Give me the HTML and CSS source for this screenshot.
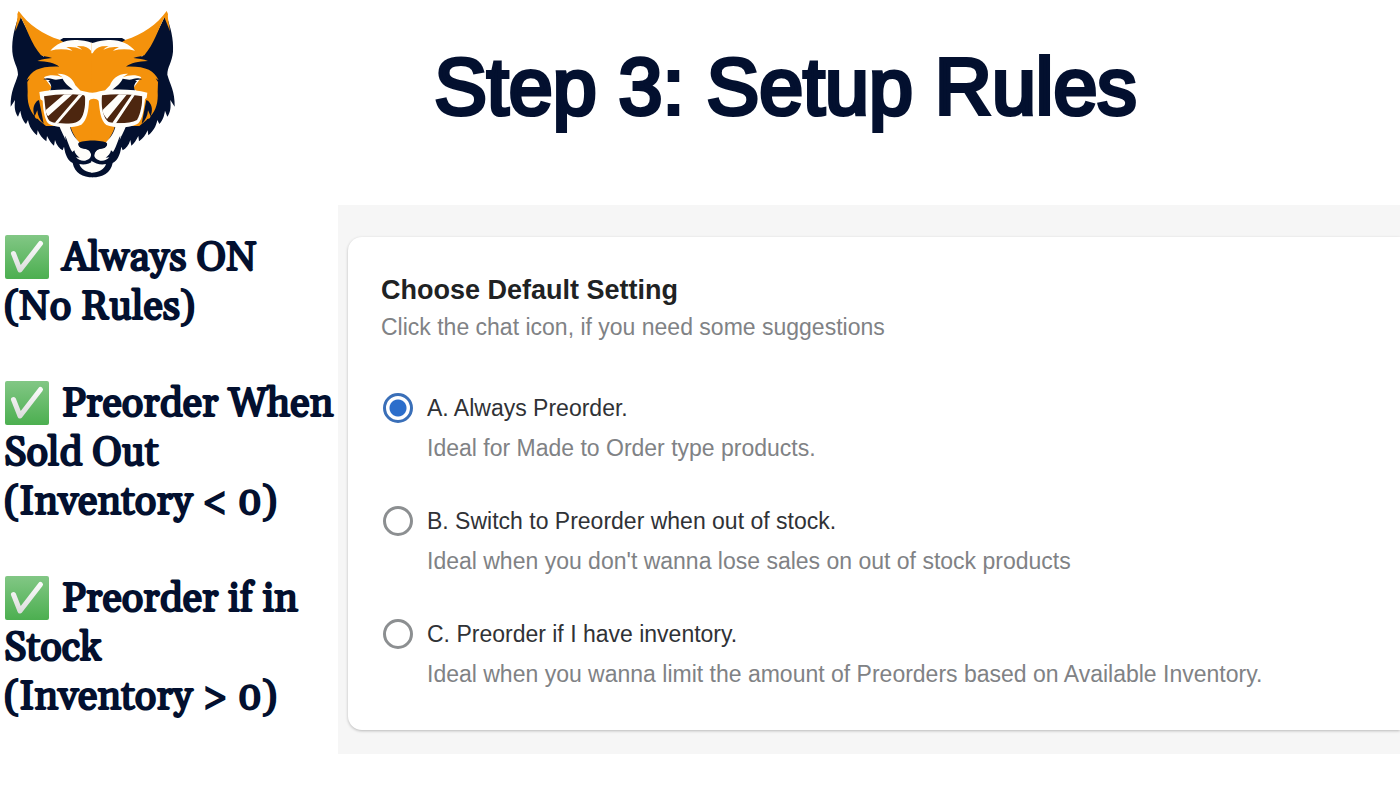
FILE: index.html
```html
<!DOCTYPE html>
<html lang="en">
<head>
<meta charset="utf-8">
<meta name="viewport" content="width=device-width, initial-scale=1">
<title>Step 3: Setup Rules</title>
<link rel="stylesheet" href="styles.css">
</head>
<body>
<header class="header">
  <svg class="logo" viewBox="0 0 528 570" role="img" aria-label="Fox wearing sunglasses">
    <defs>
      <g id="half">
        <path fill="#03102f" d="M58 42C44 84 35 115 37 155C40 188 54 200 54 224C46 254 31 272 32 320L45 300C43 322 44 336 54 350L61 332C64 350 68 361 78 372L84 360C88 380 96 393 111 406L113 391C119 405 127 415 139 424L141 408C147 420 153 430 162 437L165 420C170 436 178 446 188 451L192 440C196 466 204 482 218 489C224 520 248 532 279 532V114H190L176 122L130 170C100 130 76 80 58 42Z"/>
        <path fill="#f4920c" d="M56 33C84 73 130 105 179 119L190 126L282 130V428L236 428C226 412 216 398 211 378L138 378L116 360C113 352 108 362 104 348C88 330 81 306 83 275L82 246L89 235L80 241C94 211 120 198 178 200C163 188 142 184 112 183C126 177 141 176 156 174C142 169 132 170 123 166C94 132 80 86 63 52L46 94C48 74 54 54 52 42Z"/>
        <path fill="#fffefa" d="M151 152C169 131 201 116 240 121C258 122 270 127 282 130V160H278C272 149 264 142 250 139L230 138C238 142 242 145 246 149C226 140 211 140 199 142C206 145 213 148 217 152C196 147 174 146 151 152Z"/>
        <path fill="#fffefa" d="M132 232C150 222 172 226 188 232L172 221C204 220 220 238 226 256L242 272L219 276L146 274L156 264Z"/>
        <path fill="#03102f" d="M130 238C147 230 158 239 168 239L188 236C193 249 207 259 219 269L150 272C158 262 152 250 145 244L151 241Z"/>
        <path fill="#03102f" d="M111 303C97 318 99 333 104 349L112 331C113 348 120 361 131 371L126 345L117 300Z"/>
        <path fill="#fffefa" d="M177 376H209C213 399 225 414 238 427C232 441 243 447 256 446C270 449 278 462 270 474C258 486 239 485 228 472L239 473C232 468 224 460 223 451L217 456C205 437 201 415 195 407L197 421C190 403 184 396 177 376Z"/>
        <path fill="#fffefa" d="M238 492C254 496 269 491 282 482V518C259 518 243 508 238 492Z"/>
      </g>
      <clipPath id="lensLeft"><path d="M132 289C170 282 216 281 252 286C258 291 256 307 254 323C248 357 239 368 207 371C182 371 161 370 149 363C136 350 136 315 132 289Z"/></clipPath>
      <clipPath id="lensRight"><path d="M306 286C346 281 390 282 427 289C427 311 422 342 411 360C390 371 349 372 326 366C307 353 302 309 306 286Z"/></clipPath>
    </defs>
    <use href="#half"/>
    <use href="#half" transform="translate(556 0) scale(-1 1)"/>
    <path fill="#03102f" d="M235 430C247 419 308 419 321 430C323 439 316 444 302 446C288 449 282 456 280 484H276C276 456 269 449 254 446C240 444 233 438 235 430Z"/>
    <path fill="#fffefa" d="M118 276C160 266 222 266 258 275C272 279 286 279 299 274C338 266 400 267 442 278L440 293L435 298C431 330 429 354 415 370C392 386 345 384 319 375C301 362 299 328 296 303C291 294 271 294 267 303C266 331 261 361 244 374C214 387 164 384 144 370C132 353 129 325 128 302L121 298Z"/>
    <g clip-path="url(#lensLeft)">
      <path fill="#4d260f" d="M128 278H260V376H128Z"/>
      <path fill="#fffefa" d="M198 278H223L144 349L134 333ZM239 281L248 284L173 371H162Z"/>
    </g>
    <g clip-path="url(#lensRight)">
      <path fill="#4d260f" d="M300 278H430V376H300Z"/>
      <path fill="#fffefa" d="M361 278H385L321 357L304 334ZM397 281H407L346 373H334Z"/>
    </g>
  </svg>
  <h1 class="title">Step 3: Setup Rules</h1>
</header>
<main class="content">
  <section class="rules" aria-label="Rules">
    <svg class="symbols" aria-hidden="true">
      <defs>
        <linearGradient id="green" x2="0" y2="1"><stop stop-color="#82c785"/><stop offset="1" stop-color="#4caf50"/></linearGradient>
        <linearGradient id="silver" x2="0" y2="1"><stop stop-color="#fafafa"/><stop offset="1" stop-color="#dedede"/></linearGradient>
        <symbol id="check" viewBox="0 0 44 44">
          <rect width="44" height="44" rx="2" fill="url(#green)"/>
          <path d="M8.500 18.500L15 35L35.500 8.500" fill="none" stroke="url(#silver)" stroke-width="5" stroke-linecap="round" stroke-linejoin="round"/>
        </symbol>
      </defs>
    </svg>
    <p class="rule"><svg class="check" role="img" aria-label="Included"><use href="#check"/></svg> Always ON<br>(No Rules)</p>
    <p class="rule"><svg class="check" role="img" aria-label="Included"><use href="#check"/></svg> Preorder When Sold Out<br>(Inventory &lt; 0)</p>
    <p class="rule"><svg class="check" role="img" aria-label="Included"><use href="#check"/></svg> Preorder if in Stock<br>(Inventory &gt; 0)</p>
  </section>
  <section class="panel">
    <form class="card">
      <h2 class="card-title">Choose Default Setting</h2>
      <p class="card-hint">Click the chat icon, if you need some suggestions</p>
      <div class="options" role="radiogroup" aria-label="Default setting">
        <div class="option">
          <input class="radio" type="radio" name="setting" id="always" aria-describedby="always-help" checked>
          <label class="option-label" for="always">A. Always Preorder.</label>
          <p class="option-help" id="always-help">Ideal for Made to Order type products.</p>
        </div>
        <div class="option">
          <input class="radio" type="radio" name="setting" id="soldout" aria-describedby="soldout-help">
          <label class="option-label" for="soldout">B. Switch to Preorder when out of stock.</label>
          <p class="option-help" id="soldout-help">Ideal when you don't wanna lose sales on out of stock products</p>
        </div>
        <div class="option">
          <input class="radio" type="radio" name="setting" id="instock" aria-describedby="instock-help">
          <label class="option-label" for="instock">C. Preorder if I have inventory.</label>
          <p class="option-help" id="instock-help">Ideal when you wanna limit the amount of Preorders based on Available Inventory.</p>
        </div>
      </div>
    </form>
  </section>
</main>
</body>
</html>
```
FILE: styles.css
```css
* {
  box-sizing: border-box;
}

body,
h1,
h2,
p {
  margin: 0;
}

body {
  background: #fff;
  color: #03102f;
  font-family: "Liberation Sans", Arial, sans-serif;
}

.header {
  display: flex;
  align-items: flex-start;
  padding-right: 5px;
  padding-bottom: 15px;
}

.logo {
  flex: none;
  width: 176px;
  height: 190px;
}

.title {
  flex: 1;
  padding-top: 41px;
  font-size: 79px;
  line-height: 92px;
  font-weight: 400;
  text-align: center;
  -webkit-text-stroke: 4px #03102f;
}

.content {
  display: grid;
  grid-template-columns: 338px 1fr;
}

.symbols {
  position: absolute;
  width: 0;
  height: 0;
}

.rules {
  display: flex;
  flex-direction: column;
  gap: 48px;
  padding: 29px 0 0 4px;
  font-family: Gelasio, Georgia, "Liberation Serif", serif;
  font-size: 40px;
  font-weight: 400;
  line-height: 49px;
  -webkit-text-stroke: 2px #03102f;
}

.check {
  width: 44px;
  height: 44px;
  margin: 0 3px 0 1px;
  vertical-align: -9px;
}

.panel {
  padding: 32px 0 24px 10px;
  background: #f6f6f6;
}

.card {
  padding: 36px 32px 36px 33px;
  border-radius: 14px 0 0 14px;
  background: #fff;
  box-shadow: 0 1px 3px rgba(0, 0, 0, 0.25);
}

.card-title {
  color: #202223;
  font-size: 27px;
  line-height: 34px;
}

.card-hint,
.option-help {
  color: #808285;
  font-size: 23px;
  line-height: 40px;
}

.options {
  display: flex;
  flex-direction: column;
  gap: 33px;
  padding-top: 41px;
}

.option {
  display: grid;
  grid-template-columns: 30px 1fr;
  column-gap: 14px;
  align-items: center;
  padding-left: 2px;
}

.option-label {
  color: #303236;
  font-size: 23px;
  line-height: 40px;
}

.option-help {
  grid-column: 2;
}

.radio {
  appearance: none;
  width: 30px;
  height: 30px;
  margin: 0;
  border: 3px solid #8c8f91;
  border-radius: 50%;
  background: #fff;
}

.radio:checked {
  border-color: #3a6fb8;
  background: radial-gradient(circle, #2c6ecb 8px, #fff 9px);
}
```
